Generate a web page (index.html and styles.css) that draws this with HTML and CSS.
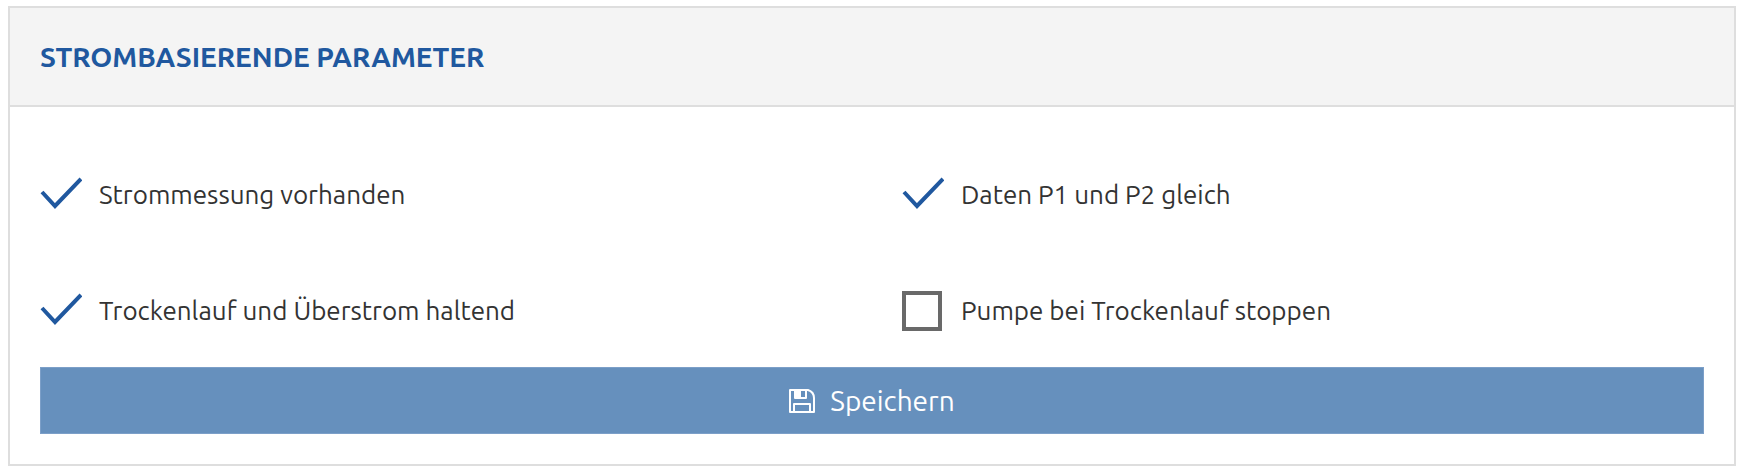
FILE: index.html
```html
<!DOCTYPE html>
<html lang="de">
<head>
    <meta charset="UTF-8">
    <meta name="viewport" content="width=device-width, initial-scale=1.0">
    <title>Strombasierende Parameter</title>
    <link rel="stylesheet" href="styles.css">
</head>
<body>
    <form class="panel">
        <div class="panel-header">
            <h2 class="panel-title">STROMBASIERENDE PARAMETER</h2>
        </div>
        <div class="panel-body">
            <div class="options">
                <label class="option" for="strommessung">
                    <input type="checkbox" id="strommessung" class="check" checked>
                    <span>Strommessung vorhanden</span>
                </label>
                <label class="option" for="datenGleich">
                    <input type="checkbox" id="datenGleich" class="check" checked>
                    <span>Daten P1 und P2 gleich</span>
                </label>
                <label class="option" for="haltend">
                    <input type="checkbox" id="haltend" class="check" checked>
                    <span>Trockenlauf und Überstrom haltend</span>
                </label>
                <label class="option" for="stoppen">
                    <input type="checkbox" id="stoppen" class="check">
                    <span>Pumpe bei Trockenlauf stoppen</span>
                </label>
            </div>
            <button type="button" class="btn">
                <svg class="btn-icon" viewBox="0 0 26 24" aria-hidden="true">
                    <path d="M1 1H19Q25 3 25 9V23H1Z M6 1V9H17V1 M5 23V15H21V23" fill="none" stroke="currentColor" stroke-width="2" stroke-linejoin="round"/>
                    <path d="M6 1H12V9H6Z" fill="currentColor"/>
                </svg>
                <span>Speichern</span>
            </button>
        </div>
    </form>
</body>
</html>
```

FILE: styles.css
```css
:root {
    --blue: #20589f;
    --blue-light: #6690bd;
    --border: #dedede;
    --text: #333333;
}

* {
    box-sizing: border-box;
}

body {
    margin: 0;
    padding: 6px 12px 8px 8px;
    background: white;
    color: var(--text);
    font-family: Ubuntu, Lato, sans-serif;
    font-size: 26px;
    line-height: 36px;
}

.panel {
    border: 2px solid var(--border);
}

.panel-header {
    padding: 31px 30px 30px;
    background: #f4f4f4;
    border-bottom: 2px solid var(--border);
}

.panel-title {
    margin: 0;
    color: var(--blue);
    font-size: 28px;
    font-weight: 700;
    line-height: 36px;
}

.panel-body {
    padding: 68px 30px 30px;
}

.options {
    display: grid;
    grid-template-columns: 1fr 1fr;
    gap: 76px 60px;
    margin-bottom: 36px;
}

.option {
    display: flex;
    align-items: center;
    cursor: pointer;
}

/* Checkbox */
.check {
    appearance: none;
    flex: none;
    width: 40px;
    height: 40px;
    margin: 0 19px 0 0;
    border: 4px solid #696969;
    background: white;
    cursor: pointer;
}

.check:checked {
    width: 42px;
    margin-right: 17px;
    border: none;
    background: url("data:image/svg+xml,%3Csvg xmlns='http://www.w3.org/2000/svg' viewBox='0 0 42 40'%3E%3Cpath d='M2 17L15 31L41 4' fill='none' stroke='%2320589f' stroke-width='4'/%3E%3C/svg%3E") no-repeat center;
}

/* Button */
.btn {
    display: flex;
    align-items: center;
    justify-content: center;
    gap: 15px;
    width: 100%;
    padding: 15px 20px 14px;
    border: 1px solid #7c9fc8;
    background: var(--blue-light);
    color: white;
    font: inherit;
    font-size: 28px;
    cursor: pointer;
}

.btn:hover {
    background: var(--blue);
}

.btn-icon {
    width: 26px;
    height: 24px;
}
```
